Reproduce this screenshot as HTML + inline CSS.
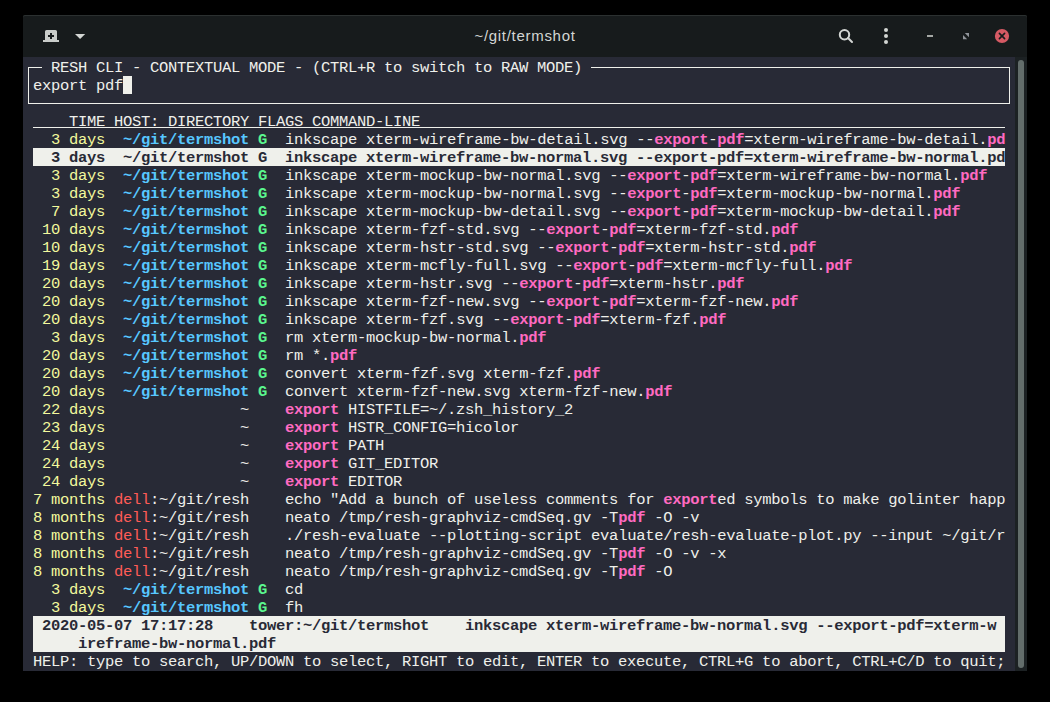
<!DOCTYPE html>
<html><head><meta charset="utf-8">
<style>
html,body{margin:0;padding:0;background:#000;width:1050px;height:702px;overflow:hidden;}
#win{position:absolute;left:23px;top:15px;width:1004px;height:656px;background:#171b1c;border-radius:2px 2px 0 0;box-shadow:inset 0 1px 0 #2b3030;}
#tb{position:absolute;left:0;top:0;width:1004px;height:42px;}
#title{position:absolute;left:0;width:1004px;top:12px;text-align:center;font-family:"Liberation Sans",sans-serif;font-size:15px;letter-spacing:0.7px;color:#d3d6d3;}
#term{position:absolute;left:0;top:42px;width:992px;height:614px;background:#282a36;}
#trough{position:absolute;left:992px;top:42px;width:12px;height:614px;background:#1c2123;}
#thumb{position:absolute;left:3px;top:3px;width:6px;height:608px;background:#636d6b;border-radius:3px;}
#grid{position:absolute;left:1px;top:1px;width:990px;height:612px;}
.ln{position:absolute;left:9px;height:18px;line-height:18px;padding-top:1px;box-sizing:border-box;white-space:pre;font-family:"Liberation Mono",monospace;font-size:15.5px;letter-spacing:-0.3px;color:#eff0eb;}

.y{color:#f3f99d}
.b{color:#57c7ff;font-weight:bold}
.g{color:#5af78e;font-weight:bold}
.p{color:#ff6ac1;font-weight:bold}
.r{color:#ff5c57}
.hl,.st{background:#eff0eb;color:#282a36;font-weight:bold;width:972px;}
.hdr{width:972px;}
.uline{position:absolute;left:9px;top:69px;width:972px;height:1px;background:#eff0eb;}
.bx{position:absolute;background:#eff0eb;}
#cur{position:absolute;left:99px;top:18px;width:9px;height:18px;background:#eff0eb;}
</style></head><body>
<div id="win">
 <div id="tb">
  <svg width="1004" height="42" style="position:absolute;left:0;top:0">
   <!-- new tab icon -->
   <path d="M22 16.5 a1.5 1.5 0 0 1 1.5 -1.5 h9 a1.5 1.5 0 0 1 1.5 1.5 V25 h2 v2 H20 v-2 h2 Z" fill="#c9ccc9"/>
   <path d="M27 18 h2 v2 h2 v2 h-2 v2 h-2 v-2 h-2 v-2 h2 Z" fill="#171b1c"/>
   <path d="M52 19 H62.2 L57.1 24 Z" fill="#d3d6d3"/>
   <!-- search -->
   <circle cx="821.5" cy="19.7" r="4.7" fill="none" stroke="#d3d6d3" stroke-width="2"/>
   <path d="M825 23 L829 27" stroke="#d3d6d3" stroke-width="2" stroke-linecap="round"/>
   <circle cx="863" cy="15" r="2" fill="#d3d6d3"/>
   <circle cx="863" cy="21" r="2" fill="#d3d6d3"/>
   <circle cx="863" cy="27" r="2" fill="#d3d6d3"/>
   <rect x="904" y="20" width="6" height="2" fill="#a5a8a5"/>
   <path d="M941.8 18 H946 V22.2 Z M940 20 V24.2 H944.2 Z" fill="#90949a"/>
   <circle cx="979" cy="21" r="7.1" fill="#d65a64"/>
   <line x1="976.4" y1="18.4" x2="981.6" y2="23.6" stroke="#171b1c" stroke-width="1.6" stroke-linecap="round"/><line x1="981.6" y1="18.4" x2="976.4" y2="23.6" stroke="#171b1c" stroke-width="1.6" stroke-linecap="round"/><rect x="978.2" y="20.2" width="1.6" height="1.6" fill="#171b1c"/>
  </svg>
  <div id="title">~/git/termshot</div>
 </div>
 <div id="term">
  <div id="grid">
   <div class="bx" style="left:4px;top:9px;width:1px;height:37px"></div>
   <div class="bx" style="left:985px;top:9px;width:1px;height:37px"></div>
   <div class="bx" style="left:4px;top:45px;width:982px;height:1px"></div>
   <div class="bx" style="left:4px;top:9px;width:14px;height:1px"></div>
   <div class="bx" style="left:567px;top:9px;width:419px;height:1px"></div>
   <div id="cur"></div>
   <div class="uline"></div>
<div class="ln t0" style="top:0px">  RESH CLI - CONTEXTUAL MODE - (CTRL+R to switch to RAW MODE)</div>
<div class="ln" style="top:18px">export pdf</div>
<div class="ln hdr" style="top:54px">    TIME HOST: DIRECTORY FLAGS COMMAND-LINE</div>
<div class="ln" style="top:72px"><span class="y">  3 days</span>  <span class="b">~/git/termshot</span> <span class="g">G</span>  inkscape xterm-wireframe-bw-detail.svg --<span class="p">export</span>-<span class="p">pdf</span>=xterm-wireframe-bw-detail.<span class="p">pd</span></div>
<div class="ln hl" style="top:90px">  3 days  ~/git/termshot G  inkscape xterm-wireframe-bw-normal.svg --export-pdf=xterm-wireframe-bw-normal.pd</div>
<div class="ln" style="top:108px"><span class="y">  3 days</span>  <span class="b">~/git/termshot</span> <span class="g">G</span>  inkscape xterm-mockup-bw-normal.svg --<span class="p">export</span>-<span class="p">pdf</span>=xterm-wireframe-bw-normal.<span class="p">pdf</span></div>
<div class="ln" style="top:126px"><span class="y">  3 days</span>  <span class="b">~/git/termshot</span> <span class="g">G</span>  inkscape xterm-mockup-bw-normal.svg --<span class="p">export</span>-<span class="p">pdf</span>=xterm-mockup-bw-normal.<span class="p">pdf</span></div>
<div class="ln" style="top:144px"><span class="y">  7 days</span>  <span class="b">~/git/termshot</span> <span class="g">G</span>  inkscape xterm-mockup-bw-detail.svg --<span class="p">export</span>-<span class="p">pdf</span>=xterm-mockup-bw-detail.<span class="p">pdf</span></div>
<div class="ln" style="top:162px"><span class="y"> 10 days</span>  <span class="b">~/git/termshot</span> <span class="g">G</span>  inkscape xterm-fzf-std.svg --<span class="p">export</span>-<span class="p">pdf</span>=xterm-fzf-std.<span class="p">pdf</span></div>
<div class="ln" style="top:180px"><span class="y"> 10 days</span>  <span class="b">~/git/termshot</span> <span class="g">G</span>  inkscape xterm-hstr-std.svg --<span class="p">export</span>-<span class="p">pdf</span>=xterm-hstr-std.<span class="p">pdf</span></div>
<div class="ln" style="top:198px"><span class="y"> 19 days</span>  <span class="b">~/git/termshot</span> <span class="g">G</span>  inkscape xterm-mcfly-full.svg --<span class="p">export</span>-<span class="p">pdf</span>=xterm-mcfly-full.<span class="p">pdf</span></div>
<div class="ln" style="top:216px"><span class="y"> 20 days</span>  <span class="b">~/git/termshot</span> <span class="g">G</span>  inkscape xterm-hstr.svg --<span class="p">export</span>-<span class="p">pdf</span>=xterm-hstr.<span class="p">pdf</span></div>
<div class="ln" style="top:234px"><span class="y"> 20 days</span>  <span class="b">~/git/termshot</span> <span class="g">G</span>  inkscape xterm-fzf-new.svg --<span class="p">export</span>-<span class="p">pdf</span>=xterm-fzf-new.<span class="p">pdf</span></div>
<div class="ln" style="top:252px"><span class="y"> 20 days</span>  <span class="b">~/git/termshot</span> <span class="g">G</span>  inkscape xterm-fzf.svg --<span class="p">export</span>-<span class="p">pdf</span>=xterm-fzf.<span class="p">pdf</span></div>
<div class="ln" style="top:270px"><span class="y">  3 days</span>  <span class="b">~/git/termshot</span> <span class="g">G</span>  rm xterm-mockup-bw-normal.<span class="p">pdf</span></div>
<div class="ln" style="top:288px"><span class="y"> 20 days</span>  <span class="b">~/git/termshot</span> <span class="g">G</span>  rm *.<span class="p">pdf</span></div>
<div class="ln" style="top:306px"><span class="y"> 20 days</span>  <span class="b">~/git/termshot</span> <span class="g">G</span>  convert xterm-fzf.svg xterm-fzf.<span class="p">pdf</span></div>
<div class="ln" style="top:324px"><span class="y"> 20 days</span>  <span class="b">~/git/termshot</span> <span class="g">G</span>  convert xterm-fzf-new.svg xterm-fzf-new.<span class="p">pdf</span></div>
<div class="ln" style="top:342px"><span class="y"> 22 days</span>               ~    <span class="p">export</span> HISTFILE=~/.zsh_history_2</div>
<div class="ln" style="top:360px"><span class="y"> 23 days</span>               ~    <span class="p">export</span> HSTR_CONFIG=hicolor</div>
<div class="ln" style="top:378px"><span class="y"> 24 days</span>               ~    <span class="p">export</span> PATH</div>
<div class="ln" style="top:396px"><span class="y"> 24 days</span>               ~    <span class="p">export</span> GIT_EDITOR</div>
<div class="ln" style="top:414px"><span class="y"> 24 days</span>               ~    <span class="p">export</span> EDITOR</div>
<div class="ln" style="top:432px"><span class="y">7 months</span> <span class="r">dell</span>:~/git/resh    echo &quot;Add a bunch of useless comments for <span class="p">export</span>ed symbols to make golinter happ</div>
<div class="ln" style="top:450px"><span class="y">8 months</span> <span class="r">dell</span>:~/git/resh    neato /tmp/resh-graphviz-cmdSeq.gv -T<span class="p">pdf</span> -O -v</div>
<div class="ln" style="top:468px"><span class="y">8 months</span> <span class="r">dell</span>:~/git/resh    ./resh-evaluate --plotting-script evaluate/resh-evaluate-plot.py --input ~/git/r</div>
<div class="ln" style="top:486px"><span class="y">8 months</span> <span class="r">dell</span>:~/git/resh    neato /tmp/resh-graphviz-cmdSeq.gv -T<span class="p">pdf</span> -O -v -x</div>
<div class="ln" style="top:504px"><span class="y">8 months</span> <span class="r">dell</span>:~/git/resh    neato /tmp/resh-graphviz-cmdSeq.gv -T<span class="p">pdf</span> -O</div>
<div class="ln" style="top:522px"><span class="y">  3 days</span>  <span class="b">~/git/termshot</span> <span class="g">G</span>  cd</div>
<div class="ln" style="top:540px"><span class="y">  3 days</span>  <span class="b">~/git/termshot</span> <span class="g">G</span>  fh</div>
<div class="ln st" style="top:558px"> 2020-05-07 17:17:28    tower:~/git/termshot    inkscape xterm-wireframe-bw-normal.svg --export-pdf=xterm-w</div>
<div class="ln st" style="top:576px">     ireframe-bw-normal.pdf</div>
<div class="ln" style="top:594px">HELP: type to search, UP/DOWN to select, RIGHT to edit, ENTER to execute, CTRL+G to abort, CTRL+C/D to quit;</div>
  </div>
 </div>
 <div id="trough"><div id="thumb"></div></div>
</div>
</body></html>
